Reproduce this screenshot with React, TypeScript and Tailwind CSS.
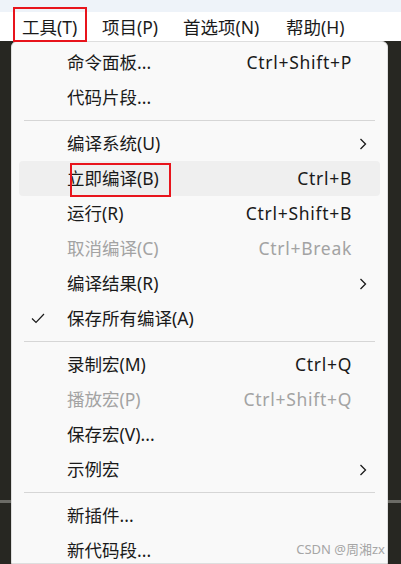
import React from 'react';

type Item =
  | { kind: 'sep' }
  | {
      kind: 'item';
      label: string;
      shortcut?: string;
      submenu?: boolean;
      disabled?: boolean;
      checked?: boolean;
      active?: boolean;
    };

const items: Item[] = [
  { kind: 'item', label: '命令面板...', shortcut: 'Ctrl+Shift+P' },
  { kind: 'item', label: '代码片段...' },
  { kind: 'sep' },
  { kind: 'item', label: '编译系统(U)', submenu: true },
  { kind: 'item', label: '立即编译(B)', shortcut: 'Ctrl+B', active: true },
  { kind: 'item', label: '运行(R)', shortcut: 'Ctrl+Shift+B' },
  { kind: 'item', label: '取消编译(C)', shortcut: 'Ctrl+Break', disabled: true },
  { kind: 'item', label: '编译结果(R)', submenu: true },
  { kind: 'item', label: '保存所有编译(A)', checked: true },
  { kind: 'sep' },
  { kind: 'item', label: '录制宏(M)', shortcut: 'Ctrl+Q' },
  { kind: 'item', label: '播放宏(P)', shortcut: 'Ctrl+Shift+Q', disabled: true },
  { kind: 'item', label: '保存宏(V)...' },
  { kind: 'item', label: '示例宏', submenu: true },
  { kind: 'sep' },
  { kind: 'item', label: '新插件...' },
  { kind: 'item', label: '新代码段...' },
];

const Chevron = () => (
  <svg width="8" height="12" viewBox="0 0 8 12" fill="none">
    <path d="M1.5 1 L6.5 6 L1.5 11" stroke="#1a1a1a" strokeWidth="1.3" />
  </svg>
);

const Check = () => (
  <svg width="14" height="11" viewBox="0 0 14 11" fill="none">
    <path d="M1 5.5 L5 9.5 L13 1" stroke="#1a1a1a" strokeWidth="1.2" />
  </svg>
);

const MenuRow = ({ item }: { item: Extract<Item, { kind: 'item' }> }) => {
  const color = item.disabled ? 'text-[#a3a3a3]' : 'text-[#1a1a1a]';
  return (
    <div
      className={`relative mx-[7px] h-[35px] flex items-center rounded-[4px] ${
        item.active ? 'bg-[#efefef]' : ''
      } ${color}`}
    >
      <div className="w-[48px] flex pl-[12px]">{item.checked && <Check />}</div>
      <span className="flex-1">{item.label}</span>
      {item.shortcut && <span className="mr-[28px] tracking-[0.7px]">{item.shortcut}</span>}
      {item.submenu && (
        <span className="mr-[13px] flex items-center">
          <Chevron />
        </span>
      )}
      {item.active && (
        <div className="absolute left-[51px] top-[2px] w-[101px] h-[34px] border-2 border-[#e8141c]" />
      )}
    </div>
  );
};

export default function App() {
  return (
    <div
      className="relative w-[401px] h-[564px] overflow-hidden bg-[#272722] text-[17.5px] leading-none"
      style={{ fontFamily: '"Noto Sans", "Noto Sans CJK SC", sans-serif' }}
    >
      <div className="h-[12px] bg-[#eef3f9]" />
      <div className="h-[29px] bg-white flex items-center pt-[3px] text-[#1a1a1a]">
        <span className="ml-[22px] w-[80px]">工具(T)</span>
        <span className="w-[81px]">项目(P)</span>
        <span className="w-[103px]">首选项(N)</span>
        <span>帮助(H)</span>
      </div>
      <div className="absolute left-[13px] top-[7px] w-[74px] h-[35px] border-2 border-[#e8141c]" />

      <div className="flex h-[523px]">
        <div className="w-[11px] pt-[459px]">
          <div className="h-[3px] bg-[#6b6b66]" />
        </div>
        <div className="flex-1 bg-[#f9f9f9] border border-[#dedede] rounded-t-[6px] pt-[3px]">
          {items.map((it, i) =>
            it.kind === 'sep' ? (
              <div key={i} className="h-[11px] flex items-center mx-[12px]">
                <div className="h-px w-full bg-[#d6d6d6]" />
              </div>
            ) : (
              <MenuRow key={i} item={it} />
            )
          )}
        </div>
        <div className="w-[13px] pt-[459px]">
          <div className="h-[3px] bg-[#6b6b66]" />
        </div>
      </div>

      <div className="absolute right-[16px] bottom-[8px] text-[13px] text-[#a6a6a6]">CSDN @周湘zx</div>
    </div>
  );
}
